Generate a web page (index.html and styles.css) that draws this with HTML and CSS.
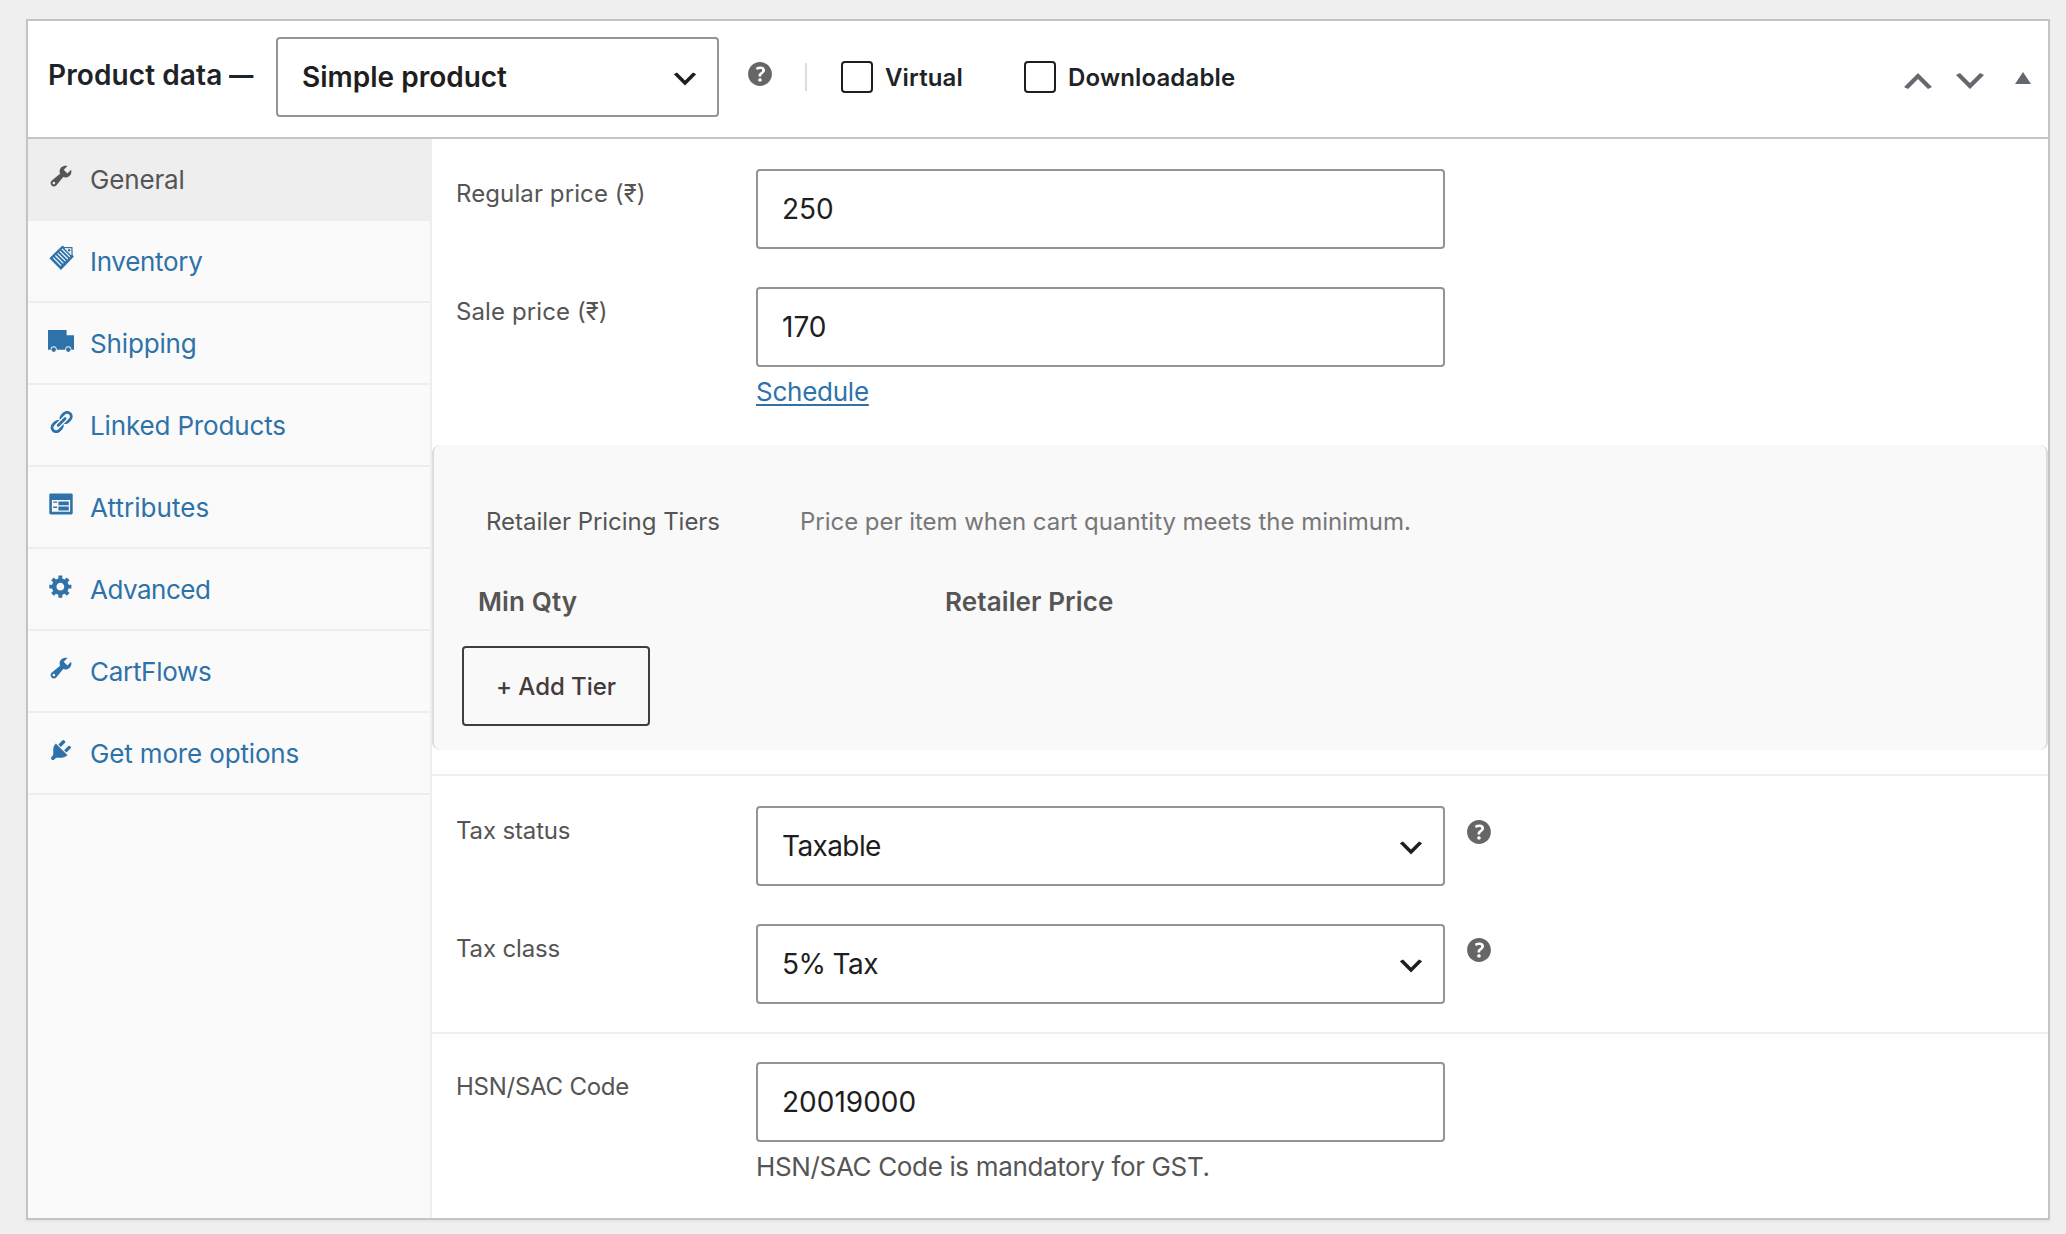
FILE: index.html
```html
<!DOCTYPE html>
<html lang="en">
<head>
<meta charset="utf-8">
<title>Product data</title>
<link rel="stylesheet" href="styles.css">
</head>
<body>
<svg class="sprite" aria-hidden="true">
  <symbol id="i-wrench" viewBox="0 0 20 20"><path d="M16.68 9.77c-1.34 1.34-3.3 1.67-4.95.99l-5.41 6.52c-.99.99-2.59.99-3.58 0s-.99-2.59 0-3.57l6.52-5.42c-.68-1.65-.35-3.61.99-4.95 1.28-1.28 3.12-1.62 4.72-1.06l-2.89 2.89 2.82 2.82 2.86-2.87c.53 1.58.18 3.39-1.08 4.65zM3.81 16.21c.4.39 1.04.39 1.43 0 .4-.4.4-1.04 0-1.43-.39-.4-1.03-.4-1.43 0-.39.39-.39 1.03 0 1.43z"/></symbol>
  <symbol id="i-tag" viewBox="0 0 26 26"><path d="M1.4 13.2 14.5.4l2 1.6h8l.2 8 1.2 1.6L13 25Z"/><path class="cut" d="m5.2 12.7 7.9 7.9M7.4 10.5l7.9 7.9M9.6 8.3l7.9 7.9M11.8 6.1l7.9 7.9M14 3.9l7.9 7.9"/><path class="hole" d="M17.4 3.2h6v6Z"/><path class="cut" d="m17 3.2 6.4 6.4"/><circle cx="21.2" cy="5.3" r="1.2"/></symbol>
  <symbol id="i-truck" viewBox="0 0 26 26"><path d="M0 3h18.6v5.2H26v14.5H0Z"/><circle class="hole" cx="5.7" cy="22.3" r="3"/><circle class="hole" cx="20.3" cy="22.3" r="3"/><circle cx="5.7" cy="22.6" r="2.3"/><circle cx="20.3" cy="22.6" r="2.3"/></symbol>
  <symbol id="i-link" viewBox="0 0 20 20"><path d="M17.74 2.76c1.68 1.69 1.68 4.41 0 6.1l-1.53 1.52c-1.12 1.12-2.7 1.47-4.14 1.09l2.62-2.61.76-.77.76-.76c.84-.84.84-2.2 0-3.04-.84-.85-2.2-.85-3.04 0l-.77.76-3.38 3.38c-.37-1.44-.02-3.02 1.1-4.14l1.52-1.53c1.69-1.68 4.42-1.68 6.1 0zM8.59 13.43l5.34-5.34c.42-.42.42-1.1 0-1.52-.44-.43-1.13-.39-1.53 0l-5.33 5.34c-.42.42-.42 1.1 0 1.52.44.43 1.13.39 1.52 0zm-.76 2.29l4.14-4.15c.38 1.44.03 3.02-1.09 4.14l-1.52 1.53c-1.69 1.68-4.41 1.68-6.1 0-1.68-1.68-1.68-4.42 0-6.1l1.53-1.52c1.12-1.12 2.7-1.47 4.14-1.1l-4.14 4.15c-.85.84-.85 2.2 0 3.05.84.84 2.2.84 3.04 0z"/></symbol>
  <symbol id="i-list" viewBox="0 0 20 20"><path d="M2 2h16c.55 0 1 .45 1 1v14c0 .55-.45 1-1 1H2c-.55 0-1-.45-1-1V3c0-.55.45-1 1-1zm15 14V7H3v9h14zM4 8v1h3V8H4zm4 0v3h8V8H8zm-4 4v1h3v-1H4zm4 0v3h8v-3H8z"/></symbol>
  <symbol id="i-gear" viewBox="0 0 20 20"><path d="M18 12h-2.18c-.17.7-.44 1.35-.81 1.93l1.54 1.54-2.1 2.1-1.54-1.54c-.58.36-1.23.63-1.91.79V19H8v-2.18c-.68-.16-1.33-.43-1.91-.79l-1.54 1.54-2.12-2.12 1.54-1.54c-.36-.58-.63-1.23-.79-1.91H1V9.03h2.17c.16-.7.44-1.35.8-1.94L2.43 5.55l2.1-2.1 1.54 1.54c.58-.37 1.24-.64 1.93-.81V2h3v2.18c.68.16 1.33.43 1.91.79l1.54-1.54 2.12 2.12-1.54 1.54c.36.59.64 1.24.8 1.94H18V12zm-8.5 1.5c1.66 0 3-1.34 3-3s-1.34-3-3-3-3 1.34-3 3 1.34 3 3 3z"/></symbol>
  <symbol id="i-plug" viewBox="0 0 20 20"><path d="M13.11 4.36L9.87 7.6 8 5.73l3.24-3.24c.35-.34 1.05-.2 1.56.32.52.51.66 1.21.31 1.55zm-8 1.77l.91-1.12 9.01 9.01-1.19.84c-.71.71-2.63 1.16-3.82 1.16H6.14L4.9 17.26c-.59.59-1.54.59-2.12 0-.59-.58-.59-1.53 0-2.12l1.24-1.24v-3.88c0-1.13.4-3.19 1.09-3.89zm7.26 3.97l3.24-3.24c.34-.35 1.04-.21 1.55.31.52.51.66 1.21.31 1.55l-3.24 3.25z"/></symbol>
  <symbol id="i-help" viewBox="0 0 20 20"><path d="M17 10c0-3.87-3.14-7-7-7-3.87 0-7 3.13-7 7s3.13 7 7 7c3.86 0 7-3.13 7-7zm-6.3 1.48H9.14v-.43c0-.38.08-.7.24-.98s.46-.57.88-.89c.41-.29.68-.53.81-.71.14-.18.2-.39.2-.62 0-.25-.09-.44-.28-.58-.19-.13-.45-.19-.79-.19-.58 0-1.25.19-2 .57l-.64-1.28c.87-.49 1.8-.74 2.77-.74.81 0 1.45.2 1.92.58.48.39.71.91.71 1.55 0 .43-.09.8-.29 1.11-.19.32-.57.67-1.11 1.06-.38.28-.61.49-.71.63-.1.15-.15.34-.15.57v.35zm-1.47 2.74c-.18-.17-.27-.42-.27-.73 0-.33.08-.58.26-.75s.43-.25.77-.25c.32 0 .57.09.75.26s.27.42.27.74c0 .3-.09.55-.27.72-.18.18-.43.27-.75.27-.33 0-.58-.09-.76-.26z"/></symbol>
  <symbol id="i-down" viewBox="0 0 20 20"><path d="M5 6l5 5 5-5 2 1-7 7-7-7 2-1z"/></symbol>
  <symbol id="i-up" viewBox="0 0 20 20"><path d="M15 14l-5-5-5 5-2-1 7-7 7 7-2 1z"/></symbol>
</svg>

<section class="postbox">
  <header class="head">
    <h2 class="title">Product data <span class="dash">—</span></h2>
    <div class="control select type"><span>Simple product</span><svg class="chev"><use href="#i-down"/></svg></div>
    <svg class="help"><use href="#i-help"/></svg>
    <span class="sep"></span>
    <label class="check"><span class="box"></span><span>Virtual</span></label>
    <label class="check"><span class="box"></span><span>Downloadable</span></label>
    <div class="handles">
      <svg class="order"><use href="#i-up"/></svg>
      <svg class="order"><use href="#i-down"/></svg>
      <svg class="toggle" viewBox="0 0 16 12"><path d="M8 0l8 12H0z"/></svg>
    </div>
  </header>
  <div class="body">
    <nav class="tabs">
      <a class="tab active"><svg><use href="#i-wrench"/></svg><span>General</span></a>
      <a class="tab tight"><svg><use href="#i-tag"/></svg><span>Inventory</span></a>
      <a class="tab"><svg><use href="#i-truck"/></svg><span>Shipping</span></a>
      <a class="tab"><svg><use href="#i-link"/></svg><span>Linked Products</span></a>
      <a class="tab loose"><svg><use href="#i-list"/></svg><span>Attributes</span></a>
      <a class="tab tighter"><svg><use href="#i-gear"/></svg><span>Advanced</span></a>
      <a class="tab tight"><svg><use href="#i-wrench"/></svg><span>CartFlows</span></a>
      <a class="tab"><svg><use href="#i-plug"/></svg><span>Get more options</span></a>
    </nav>
    <main class="panel">
      <div class="group prices">
        <div class="field"><label>Regular price (₹)</label><div class="control"><span>250</span></div></div>
        <div class="field"><label>Sale price (₹)</label>
          <div class="stack"><div class="control"><span>170</span></div><a class="note link"><span>Schedule</span></a></div></div>
      </div>
      <div class="tiers">
        <div class="tiers-intro"><span class="tiers-label">Retailer Pricing Tiers</span><span class="tiers-desc">Price per item when cart quantity meets the minimum.</span></div>
        <div class="tiers-head"><strong>Min Qty</strong><strong>Retailer Price</strong></div>
        <button class="add"><span>+ Add Tier</span></button>
      </div>
      <div class="group tax">
        <div class="field"><label>Tax status</label><div class="control select"><span>Taxable</span><svg class="chev"><use href="#i-down"/></svg></div><svg class="help"><use href="#i-help"/></svg></div>
        <div class="field"><label>Tax class</label><div class="control select"><span>5% Tax</span><svg class="chev"><use href="#i-down"/></svg></div><svg class="help"><use href="#i-help"/></svg></div>
      </div>
      <div class="group hsn">
        <div class="field"><label>HSN/SAC Code</label>
          <div class="stack"><div class="control"><span>20019000</span></div><p class="note"><span>HSN/SAC Code is mandatory for GST.</span></p></div></div>
      </div>
    </main>
  </div>
</section>
</body>
</html>
```

FILE: styles.css
```css
* { box-sizing: border-box; }

body {
  margin: 0;
  padding: 19px 16px 14px 26px;
  height: 1234px;
  background: #efeff0;
  color: #555;
  font-family: Inter, "Liberation Sans", sans-serif;
  font-size: 26px;
  overflow: hidden;
}

svg { display: block; fill: currentColor; flex: none; }
.sprite { position: absolute; width: 0; height: 0; }

.postbox {
  display: flex;
  flex-direction: column;
  height: 1201px;
  border: 2px solid #c3c4c7;
  background: #fff;
  box-shadow: 0 2px 2px rgba(0, 0, 0, .04);
}

/* Header */
.head {
  display: flex;
  align-items: flex-start;
  height: 118px;
  padding: 16px 17px 0 20px;
  border-bottom: 2px solid #c3c4c7;
  color: #1d2327;
}
.title {
  width: 228px;
  margin: 0;
  font-size: 28px;
  font-weight: 600;
  line-height: 76px;
  letter-spacing: .1px;
  white-space: nowrap;
}
.dash { display: inline-block; transform: scaleX(.87); transform-origin: left; }
.head .help { margin: 20px 0 0 24px; }
.sep { width: 2px; height: 28px; margin: 26px 34px 0 28px; background: #ddd; }
.check {
  display: flex;
  align-items: center;
  width: 183px;
  height: 80px;
  gap: 12px;
  flex: none;
  font-size: 24px;
  font-weight: 600;
  letter-spacing: .15px;
}
.box { flex: none; width: 32px; height: 32px; border: 2px solid #1e1e1e; border-radius: 4px; background: #fff; }
.handles { display: flex; margin-left: auto; color: #646970; }
.order { width: 40px; height: 40px; margin: 24px 12px 0 0; }
.toggle { width: 16px; height: 12px; margin: 35px 0 0 13px; }

.control {
  display: flex;
  align-items: center;
  width: 689px;
  height: 80px;
  padding: 0 16px 0 24px;
  border: 2px solid #949494;
  border-radius: 4px;
  background: #fff;
  color: #1e1e1e;
  font-size: 28px;
}
.select { letter-spacing: -.6px; }
.control.type { width: 443px; font-weight: 600; letter-spacing: 0; }
.chev { width: 32px; height: 32px; margin: 4px 0 0 auto; }
.help { width: 34px; height: 34px; color: #666; }

/* Sidebar */
.body { display: flex; flex: 1; }
.tabs { width: 404px; border-right: 2px solid #eee; background: #fafafa; }
.tab {
  display: flex;
  height: 82px;
  padding-left: 20px;
  border-bottom: 2px solid #eee;
  color: #2e72a9;
  line-height: 82px;
  letter-spacing: -.15px;
}
.tab.tight { letter-spacing: -.3px; }
.tab.tighter { letter-spacing: -.5px; }
.tab.loose { letter-spacing: .05px; }
.tab svg { width: 26px; height: 26px; margin: 24px 16px 0 0; }
.tab.active { margin-right: -2px; background: #eee; color: #555; }
.cut { fill: none; stroke: #fafafa; stroke-width: 1.2; }
.hole { fill: #fafafa; }

/* Panel */
.panel { flex: 1; }
.group { display: flex; flex-direction: column; gap: 38px; padding-left: 24px; }
.prices { height: 306px; padding-top: 30px; }
.prices label { letter-spacing: .1px; }
.field { display: flex; align-items: flex-start; }
.field label { width: 300px; font-size: 24px; line-height: 49px; }
.field .help { margin: 9px 0 0 17px; }
.note { display: block; margin: 0; line-height: 49px; letter-spacing: -.35px; }
.link {
  color: #2e72a9;
  letter-spacing: -.25px;
  text-decoration: underline;
  text-decoration-thickness: 2px;
  text-underline-offset: 3px;
}

.tiers {
  height: 305px;
  padding: 52px 0 0 28px;
  border: solid #ddd;
  border-width: 0 2px;
  border-radius: 8px;
  background: #f9f9f9;
}
.tiers-intro { display: flex; padding-left: 24px; font-size: 24px; line-height: 49px; letter-spacing: -.03px; }
.tiers-label { width: 314px; }
.tiers-desc { color: #777; }
.tiers-head { display: flex; padding: 32px 0 0 16px; line-height: 48px; letter-spacing: .12px; }
.tiers-head strong { width: 467px; font-weight: 600; }
.add {
  width: 188px;
  height: 80px;
  margin: 20px 0 0;
  padding: 0;
  border: 2px solid #443c39;
  border-radius: 4px;
  background: transparent;
  color: #443c39;
  font: 500 24px Inter, sans-serif;
  letter-spacing: -.05px;
}

.tax { height: 258px; margin-top: 24px; padding-top: 30px; border-top: 2px solid #eee; }
.tax label { letter-spacing: -.15px; }
.hsn { padding-top: 28px; border-top: 2px solid #eee; }
.hsn label { letter-spacing: -.25px; }
```
